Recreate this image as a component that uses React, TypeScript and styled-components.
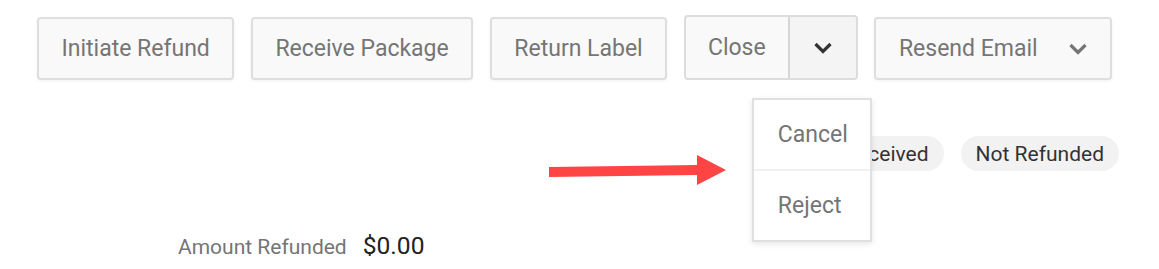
import styled, {createGlobalStyle} from "styled-components";

const Global = createGlobalStyle`
  body {
    margin: 0;
    background: #ffffff;
    font-family: Roboto, "Liberation Sans", sans-serif;
  }
`

const Page = styled.div`
  position: relative;
  width: 1159px;
  height: 269px;
  padding: 15px 0 0 37px;
  box-sizing: border-box;
`

const Toolbar = styled.div`
  display: flex;
  align-items: flex-end;
  gap: 16.6px;
`

const ActionButton = styled.button`
  display: flex;
  align-items: center;
  gap: 30px;
  height: 63px;
  padding: 0 22.5px;
  border: 2px solid #dedede;
  border-radius: 4px;
  background: #f9f9f9;
  box-shadow: 0 1px 3px rgba(0, 0, 0, 0.06);
  color: #757575;
  font-family: inherit;
  font-size: 23px;
  cursor: pointer;
`

const SplitGroup = styled.div`
  position: relative;
  display: flex;
  height: 65px;
  border: 2px solid #dcdcdc;
  border-radius: 4px;
  box-sizing: border-box;
  background: #f9f9f9;
`

const SplitMain = styled.button`
  width: 104px;
  padding: 0;
  border: none;
  border-right: 2px solid #d6d6d6;
  background: transparent;
  color: #757575;
  font-family: inherit;
  font-size: 23px;
`

const SplitToggle = styled.button`
  width: 66px;
  display: flex;
  align-items: center;
  justify-content: center;
  padding: 0;
  border: none;
  background: #f4f4f4;
  border-radius: 0 3px 3px 0;
`

const Menu = styled.div`
  position: absolute;
  top: 81px;
  left: 66px;
  width: 120px;
  background: #ffffff;
  border: 2px solid #e0e0e0;
  box-sizing: border-box;
  box-shadow: 0 2px 6px rgba(0, 0, 0, 0.1);
  z-index: 2;
`

const MenuItem = styled.div`
  height: 69px;
  display: flex;
  align-items: center;
  padding-left: 24px;
  color: #757575;
  font-size: 23px;
  & + & {
    border-top: 2px solid #f0f0f0;
  }
`

const StatusRow = styled.div`
  display: flex;
  justify-content: flex-end;
  gap: 17px;
  margin-top: 56px;
  padding-right: 40px;
`

const Chip = styled.span`
  height: 35px;
  display: flex;
  align-items: center;
  padding: 0 15px;
  border-radius: 18px;
  background: #f2f2f2;
  color: #333333;
  font-size: 21px;
`

const AmountRow = styled.div`
  display: flex;
  align-items: baseline;
  gap: 16px;
  margin-top: 60px;
  margin-left: 141px;
`

const AmountLabel = styled.span`
  color: #757575;
  font-size: 21px;
`

const AmountValue = styled.span`
  color: #222222;
  font-size: 24.6px;
`

const Pointer = styled.svg`
  position: absolute;
  left: 548px;
  top: 154px;
`

function Chevron({color}: {color: string}) {
    return (
        <svg width="20" height="12" viewBox="0 0 20 12">
            <polyline points="2.5,2 10,9.5 17.5,2" fill="none" stroke={color} strokeWidth="3.2"/>
        </svg>
    )
}

export default function App() {
    return (
        <Page>
            <Global/>
            <Toolbar>
                <ActionButton>Initiate Refund</ActionButton>
                <ActionButton>Receive Package</ActionButton>
                <ActionButton>Return Label</ActionButton>
                <SplitGroup>
                    <SplitMain>Close</SplitMain>
                    <SplitToggle><Chevron color="#333333"/></SplitToggle>
                    <Menu>
                        <MenuItem>Cancel</MenuItem>
                        <MenuItem>Reject</MenuItem>
                    </Menu>
                </SplitGroup>
                <ActionButton>
                    Resend Email
                    <Chevron color="#757575"/>
                </ActionButton>
            </Toolbar>
            <StatusRow>
                <Chip>Received</Chip>
                <Chip>Not Refunded</Chip>
            </StatusRow>
            <AmountRow>
                <AmountLabel>Amount Refunded</AmountLabel>
                <AmountValue>$0.00</AmountValue>
            </AmountRow>
            <Pointer width="180" height="32" viewBox="0 0 180 32">
                <polygon points="1,13 149,11 149,1 178,16 149,31 149,21 1,23" fill="#ff4444"/>
            </Pointer>
        </Page>
    )
}
